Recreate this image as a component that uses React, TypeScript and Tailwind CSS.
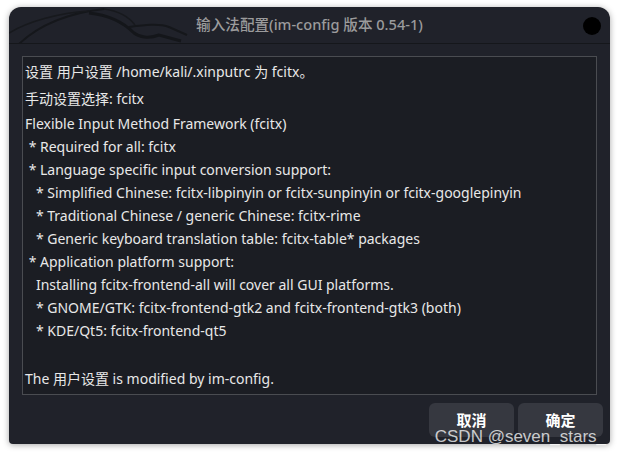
const LINES: { text: string; h: string }[] = [
  { text: "设置 用户设置 /home/kali/.xinputrc 为 fcitx。", h: "h-[28px]" },
  { text: "手动设置选择: fcitx", h: "h-[27px]" },
  { text: "Flexible Input Method Framework (fcitx)", h: "h-[23px]" },
  { text: " * Required for all: fcitx", h: "h-[23px]" },
  { text: " * Language specific input conversion support:", h: "h-[23px]" },
  { text: "   * Simplified Chinese: fcitx-libpinyin or fcitx-sunpinyin or fcitx-googlepinyin", h: "h-[23px]" },
  { text: "   * Traditional Chinese / generic Chinese: fcitx-rime", h: "h-[23px]" },
  { text: "   * Generic keyboard translation table: fcitx-table* packages", h: "h-[23px]" },
  { text: " * Application platform support:", h: "h-[23px]" },
  { text: "   Installing fcitx-frontend-all will cover all GUI platforms.", h: "h-[23px]" },
  { text: "   * GNOME/GTK: fcitx-frontend-gtk2 and fcitx-frontend-gtk3 (both)", h: "h-[23px]" },
  { text: "   * KDE/Qt5: fcitx-frontend-qt5", h: "h-[23px]" },
  { text: "", h: "h-[23px]" },
  { text: "The 用户设置 is modified by im-config.", h: "h-[27px]" },
];

function Dragon() {
  // faint kali dragon watermark behind the title
  return (
    <svg
      className="absolute left-0 top-0 h-[37px] w-[200px]"
      viewBox="0 0 200 37"
      fill="none"
      aria-hidden
    >
      <path d="M10 37 C 30 18, 60 6, 95 2" stroke="#15171b" strokeWidth="2" />
      <path d="M0 26 C 20 14, 50 6, 80 4" stroke="#17191d" strokeWidth="1.5" />
      <path d="M80 6 C 100 8, 115 16, 125 26 C 130 30, 140 32, 150 28 L 172 34" stroke="#14161a" strokeWidth="3" />
      <path d="M120 20 C 135 18, 150 16, 160 20 L 178 28" stroke="#15171b" strokeWidth="2" />
      <path d="M95 2 C 110 4, 120 10, 126 18" stroke="#17191d" strokeWidth="1.5" />
    </svg>
  );
}

export default function App() {
  return (
    <div className="relative h-[455px] w-[620px] overflow-hidden bg-white pl-[9px] pt-[7px]">
      <div className="flex h-[437px] w-[601px] flex-col rounded-t-[12px] rounded-b-[4px] bg-[#20222a] shadow-[0_1px_6px_rgba(0,0,0,0.35)]">
        <div className="relative flex h-[37px] shrink-0 items-center justify-center overflow-hidden rounded-t-[12px] border-b border-[#15171b]">
          <Dragon />
          <span className="relative font-['Noto_Sans','Noto_Sans_CJK_SC',sans-serif] text-[14.6px] font-medium text-[#9b9b9c]">
            输入法配置(im-config 版本 0.54-1)
          </span>
          <span className="absolute right-[9px] top-[10px] h-[18px] w-[18px] rounded-full bg-black" />
        </div>
        <div className="ml-[13px] mt-[12px] flex h-[339px] w-[575px] flex-col border border-[#4a4c51] bg-[#1b1d23] pl-[2px] font-['Noto_Sans','Noto_Sans_CJK_SC',sans-serif] text-[14px] text-[#e8e8e8]">
          {LINES.map((l, i) => (
            <div key={i} className={`${l.h} flex shrink-0 items-center whitespace-pre`}>
              {l.text}
            </div>
          ))}
        </div>
        <div className="mr-[7px] mt-[8px] flex justify-end gap-[4px]">
          <button className="h-[34px] w-[85px] rounded-[6px] bg-[#363840] font-['Noto_Sans_CJK_SC',sans-serif] text-[15px] font-bold text-white">
            取消
          </button>
          <button className="h-[34px] w-[85px] rounded-[6px] bg-[#363840] font-['Noto_Sans_CJK_SC',sans-serif] text-[15px] font-bold text-white">
            确定
          </button>
        </div>
      </div>
      <span className="absolute bottom-[8px] right-[14px] font-['Liberation_Sans',Arial,sans-serif] text-[17px] leading-tight text-white/75">
        CSDN @seven_stars_
      </span>
    </div>
  );
}
